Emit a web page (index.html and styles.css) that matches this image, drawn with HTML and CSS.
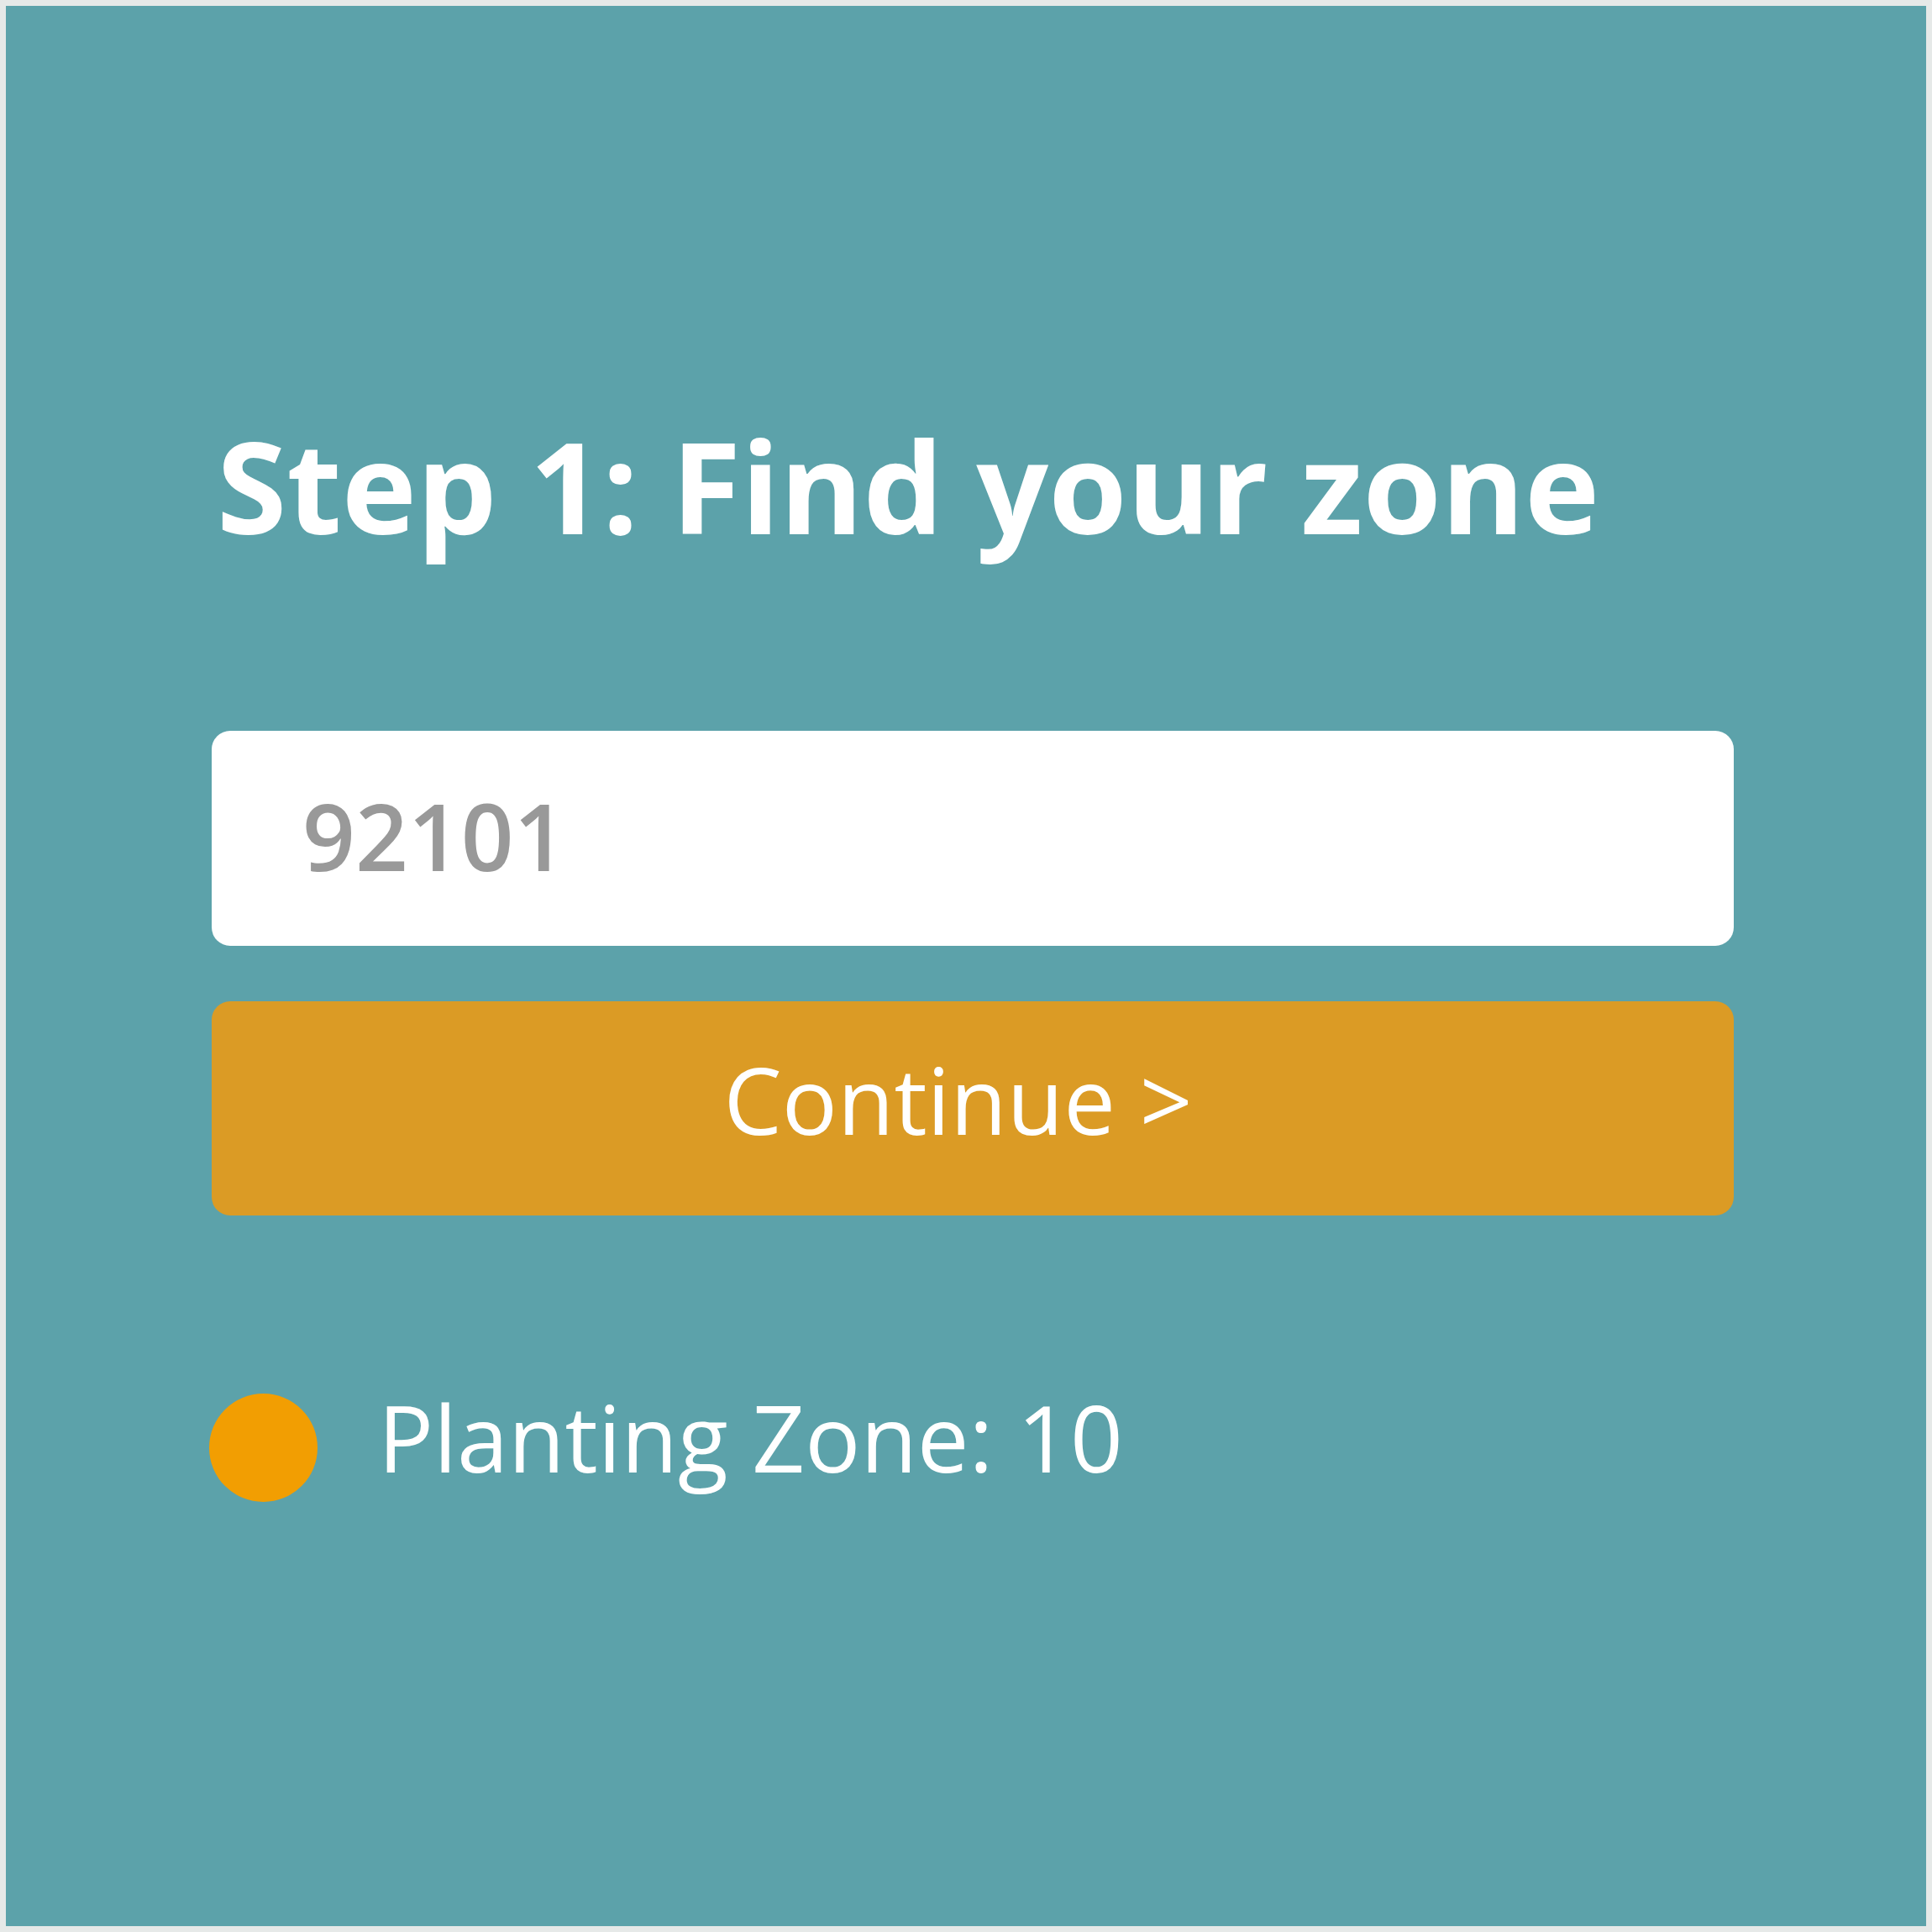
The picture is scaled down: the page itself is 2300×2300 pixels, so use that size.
FILE: index.html
```html
<!DOCTYPE html>
<html lang="en">
<head>
<meta charset="utf-8">
<title>Step 1: Find your zone</title>
<link rel="stylesheet" href="styles.css">
</head>
<body>
<div class="frame">
  <main class="panel">
    <h1 class="title">Step 1: Find your zone</h1>
    <div class="zip-field">92101</div>
    <button class="continue" type="button">Continue &gt;</button>
    <div class="zone-row">
      <span class="zone-dot"></span>
      <span class="zone-label">Planting Zone: 10</span>
    </div>
  </main>
</div>
</body>
</html>
```

FILE: styles.css
```css
html, body {
  margin: 0;
  padding: 0;
}
body {
  background: #e6e9e8;
  font-family: "Open Sans", "DejaVu Sans", sans-serif;
}
.frame {
  width: 2300px;
  height: 2300px;
  box-sizing: border-box;
  padding: 7px;
}
.panel {
  height: 100%;
  box-sizing: border-box;
  background: #5ca2aa;
  padding: 477px 229px 0 245px;
  display: flex;
  flex-direction: column;
}
.title {
  margin: 0 0 0 6px;
  font-size: 151px;
  font-weight: 700;
  line-height: 187px;
  color: #ffffff;
  white-space: nowrap;
}
.zip-field {
  margin-top: 199px;
  height: 256px;
  box-sizing: border-box;
  background: #ffffff;
  border-radius: 22px;
  padding: 0 0 8px 108px;
  display: flex;
  align-items: center;
  font-size: 110px;
  font-weight: 600;
  color: #999999;
}
.continue {
  margin-top: 66px;
  height: 255px;
  box-sizing: border-box;
  border: none;
  background: #db9b25;
  border-radius: 22px;
  padding: 0 35px 23px 0;
  display: flex;
  align-items: center;
  justify-content: center;
  font-family: inherit;
  font-size: 110px;
  color: #ffffff;
}
.zone-row {
  margin-top: 188px;
  display: flex;
  align-items: flex-start;
  gap: 72px;
}
.zone-dot {
  flex: none;
  width: 129px;
  height: 129px;
  margin-top: 24px;
  margin-left: -3px;
  border-radius: 50%;
  background: #f29e02;
}
.zone-label {
  font-size: 110px;
  color: #ffffff;
  white-space: nowrap;
}
```
